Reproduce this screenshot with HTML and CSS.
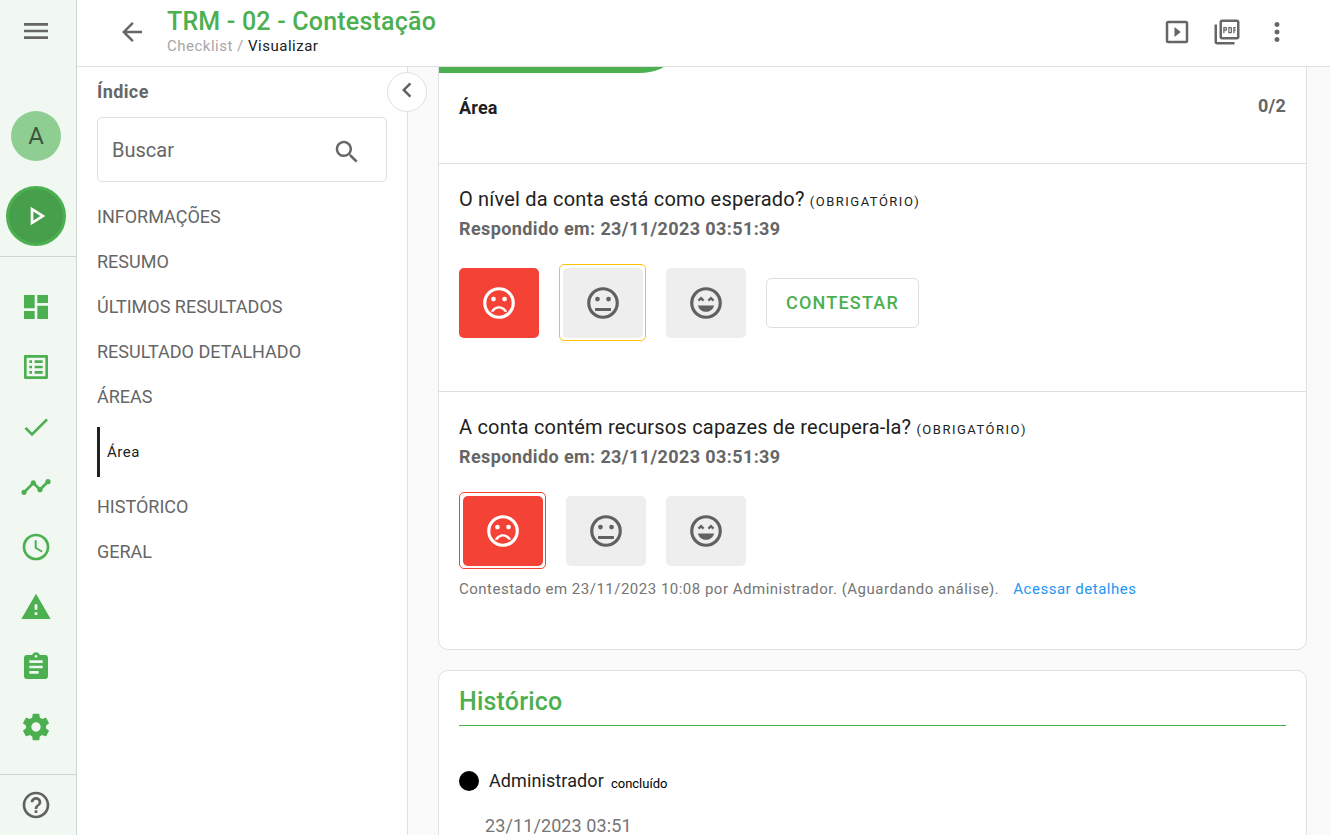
FILE: index.html
```html
<!DOCTYPE html>
<html lang="pt-BR">
<head>
<meta charset="utf-8">
<title>TRM - 02 - Contestação</title>
<link rel="stylesheet" href="styles.css">
</head>
<body>
<svg class="sprite" aria-hidden="true">
  <symbol id="sad" viewBox="0 0 24 24"><path d="M20,12A8,8 0 0,0 12,4A8,8 0 0,0 4,12A8,8 0 0,0 12,20A8,8 0 0,0 20,12M22,12A10,10 0 0,1 12,22A10,10 0 0,1 2,12A10,10 0 0,1 12,2A10,10 0 0,1 22,12M15.5,8A1.5,1.5 0 1,1 15.5,11A1.5,1.5 0 1,1 15.5,8M8.5,8A1.5,1.5 0 1,1 8.5,11A1.5,1.5 0 1,1 8.5,8M12 14c-2.330 0-4.320 1.450-5.120 3.500h1.670c.69-1.190 1.970-2 3.450-2s2.750.81 3.450 2h1.670c-.8-2.050-2.790-3.500-5.120-3.500z"/></symbol>
  <symbol id="neutral" viewBox="0 0 24 24"><path d="M20,12A8,8 0 0,0 12,4A8,8 0 0,0 4,12A8,8 0 0,0 12,20A8,8 0 0,0 20,12M22,12A10,10 0 0,1 12,22A10,10 0 0,1 2,12A10,10 0 0,1 12,2A10,10 0 0,1 22,12M15.5,8A1.5,1.5 0 1,1 15.5,11A1.5,1.5 0 1,1 15.5,8M8.5,8A1.5,1.5 0 1,1 8.5,11A1.5,1.5 0 1,1 8.5,8M7,15.1H17V17H7Z"/></symbol>
  <symbol id="happy" viewBox="0 0 24 24"><path d="M20,12A8,8 0 0,0 12,4A8,8 0 0,0 4,12A8,8 0 0,0 12,20A8,8 0 0,0 20,12M22,12A10,10 0 0,1 12,22A10,10 0 0,1 2,12A10,10 0 0,1 12,2A10,10 0 0,1 22,12M6.9,13.500H17.1C16.6,15.9 14.5,17.500 12,17.500C9.500,17.500 7.400,15.900 6.900,13.500M13 9.940L14.060 11l1.060-1.060L16.180 11l1.060-1.060-2.120-2.120zM8.880 9.940L9.940 11 11 9.940 8.880 7.820 6.760 9.940 7.820 11z"/></symbol>
</svg>
<div class="app">
  <nav class="rail" aria-label="Principal">
    <div class="rail-top">
      <button class="icon-btn" aria-label="Menu"><svg class="i32" viewBox="0 0 24 24"><path d="M3 6h18v2H3zM3 11h18v2H3zM3 16h18v2H3z"/></svg></button>
      <button class="avatar">A</button>
      <button class="start" aria-label="Iniciar"><svg class="i32" viewBox="0 0 24 24"><path d="M10 8.640L15.270 12 10 15.360zM8 5v14l11-7z"/></svg></button>
    </div>
    <div class="rail-links">
      <a href="#" aria-label="Painel"><svg class="i32" viewBox="0 0 24 24"><path d="M13 3v6h8V3m-8 18h8V11h-8M3 21h8v-6H3m0-2h8V3H3v10z"/></svg></a>
      <a href="#" aria-label="Checklists"><svg class="i32" viewBox="0 0 24 24"><path d="M11 7h6v2h-6zm0 4h6v2h-6zm0 4h6v2h-6zM7 7h2v2H7zm0 4h2v2H7zm0 4h2v2H7zM20.100 3H3.900c-.5 0-.9.400-.9.900v16.200c0 .4.400.9.900.9h16.200c.4 0 .9-.5.900-.9V3.900c0-.5-.5-.9-.9-.9zM19 19H5V5h14z"/></svg></a>
      <a href="#" aria-label="Concluídos"><svg class="i32" viewBox="0 0 24 24"><path d="M9 16.200L4.800 12l-1.400 1.400L9 19 21 7l-1.400-1.400z"/></svg></a>
      <a href="#" aria-label="Análises"><svg class="i32" viewBox="0 0 24 24"><path d="M23 8c0 1.100-.9 2-2 2-.18 0-.35-.02-.51-.07l-3.560 3.550c.05.160.07.340.07.520 0 1.100-.9 2-2 2s-2-.9-2-2c0-.18.020-.36.070-.52l-2.550-2.550c-.16.050-.34.070-.52.070s-.36-.02-.52-.07l-4.550 4.560c.05.160.07.330.07.510 0 1.100-.9 2-2 2s-2-.9-2-2 .9-2 2-2c.18 0 .350.020.510.070l4.560-4.550C8.020 9.360 8 9.180 8 9c0-1.100.9-2 2-2s2 .9 2 2c0 .18-.02.360-.07.520l2.550 2.550c.16-.05.340-.07.520-.07s.36.020.52.070l3.550-3.560C19.020 8.350 19 8.180 19 8c0-1.100.9-2 2-2s2 .9 2 2z"/></svg></a>
      <a href="#" aria-label="Agenda"><svg class="i32" viewBox="0 0 24 24"><path d="M12 20a8 8 0 0 0 8-8 8 8 0 0 0-8-8 8 8 0 0 0-8 8 8 8 0 0 0 8 8m0-18a10 10 0 0 1 10 10 10 10 0 0 1-10 10A10 10 0 0 1 2 12 10 10 0 0 1 12 2m.5 5v5.250l4.500 2.670-.75 1.230L11 13V7z"/></svg></a>
      <a href="#" aria-label="Alertas"><svg class="i32" viewBox="0 0 24 24"><path d="M1 21h22L12 2 1 21zm12-3h-2v-2h2v2zm0-4h-2v-4h2v4z"/></svg></a>
      <a href="#" aria-label="Planos"><svg class="i32" viewBox="0 0 24 24"><path d="M19 3h-4.180C14.400 1.840 13.300 1 12 1s-2.400.84-2.820 2H5c-1.100 0-2 .9-2 2v14c0 1.100.9 2 2 2h14c1.100 0 2-.9 2-2V5c0-1.100-.9-2-2-2zm-7 0c.55 0 1 .45 1 1s-.45 1-1 1-1-.45-1-1 .45-1 1-1zm2 14H7v-2h7v2zm3-4H7v-2h10v2zm0-4H7V7h10v2z"/></svg></a>
      <a href="#" aria-label="Configurações"><svg class="i32" viewBox="0 0 24 24"><path d="M12,15.500A3.500,3.500 0 0,1 8.500,12A3.500,3.500 0 0,1 12,8.500A3.500,3.500 0 0,1 15.500,12A3.500,3.500 0 0,1 12,15.500M19.430,12.970C19.470,12.650 19.500,12.330 19.500,12C19.500,11.670 19.470,11.340 19.430,11L21.540,9.370C21.730,9.220 21.780,8.950 21.660,8.730L19.660,5.270C19.540,5.050 19.270,4.960 19.050,5.050L16.560,6.050C16.040,5.660 15.500,5.320 14.870,5.070L14.500,2.420C14.460,2.180 14.250,2 14,2H10C9.750,2 9.540,2.180 9.500,2.420L9.130,5.070C8.500,5.320 7.960,5.660 7.440,6.050L4.950,5.050C4.730,4.960 4.460,5.050 4.340,5.270L2.340,8.730C2.210,8.950 2.270,9.220 2.460,9.370L4.570,11C4.530,11.340 4.500,11.670 4.500,12C4.500,12.330 4.530,12.650 4.570,12.970L2.460,14.630C2.270,14.780 2.210,15.050 2.340,15.270L4.340,18.730C4.460,18.950 4.730,19.030 4.950,18.950L7.440,17.940C7.960,18.340 8.500,18.680 9.130,18.930L9.500,21.580C9.540,21.820 9.750,22 10,22H14C14.250,22 14.460,21.820 14.500,21.580L14.870,18.930C15.500,18.670 16.040,18.340 16.560,17.940L19.050,18.950C19.270,19.030 19.540,18.950 19.660,18.730L21.660,15.270C21.780,15.050 21.730,14.780 21.540,14.630L19.430,12.970Z"/></svg></a>
    </div>
    <a class="rail-help" href="#" aria-label="Ajuda"><svg class="i32" viewBox="0 0 24 24"><path d="M11 18h2v-2h-2v2zm1-16C6.480 2 2 6.480 2 12s4.480 10 10 10 10-4.480 10-10S17.520 2 12 2zm0 18c-4.410 0-8-3.590-8-8s3.590-8 8-8 8 3.590 8 8-3.590 8-8 8zm0-14c-2.210 0-4 1.790-4 4h2c0-1.100.9-2 2-2s2 .9 2 2c0 2-3 1.750-3 5h2c0-2.250 3-2.500 3-5 0-2.210-1.790-4-4-4z"/></svg></a>
  </nav>
  <div class="page">
    <header class="topbar">
      <button class="icon-btn" aria-label="Voltar"><svg class="i30" viewBox="0 0 24 24"><path d="M20 11H7.830l5.590-5.590L12 4l-8 8 8 8 1.410-1.410L7.830 13H20v-2z"/></svg></button>
      <div class="heading">
        <h1>TRM - 02 - Contestação</h1>
        <p class="crumbs"><a href="#">Checklist</a> / <span>Visualizar</span></p>
      </div>
      <button class="icon-btn" aria-label="Apresentar"><svg class="i30" viewBox="0 0 24 24"><path d="M19 19H5V5h14m0-2H5a2 2 0 0 0-2 2v14a2 2 0 0 0 2 2h14a2 2 0 0 0 2-2V5a2 2 0 0 0-2-2m-9 5v8l5-4"/></svg></button>
      <button class="icon-btn" aria-label="Exportar PDF"><svg class="i30" viewBox="0 0 24 24"><path d="M20 2H8c-1.100 0-2 .9-2 2v12c0 1.100.9 2 2 2h12c1.100 0 2-.9 2-2V4c0-1.100-.9-2-2-2zm0 14H8V4h12v12zM4 6H2v14c0 1.100.9 2 2 2h14v-2H4V6zm12 6V9c0-.55-.45-1-1-1h-2v5h2c.55 0 1-.45 1-1zm-2-3h1v3h-1V9zm4 2h1v-1h-1V9h1V8h-2v5h1zm-8 0h1c.55 0 1-.45 1-1V9c0-.55-.45-1-1-1H9v5h1v-2zm0-2h1v1h-1V9z"/></svg></button>
      <button class="icon-btn" aria-label="Mais opções"><svg class="i30" viewBox="0 0 24 24"><path d="M12 8c1.100 0 2-.9 2-2s-.9-2-2-2-2 .9-2 2 .9 2 2 2zm0 2c-1.100 0-2 .9-2 2s.9 2 2 2 2-.9 2-2-.9-2-2-2zm0 6c-1.100 0-2 .9-2 2s.9 2 2 2 2-.9 2-2-.9-2-2-2z"/></svg></button>
    </header>
    <div class="body">
      <aside class="index">
        <h2>Índice</h2>
        <button class="collapse" aria-label="Recolher índice"><svg class="i30" viewBox="0 0 24 24"><path d="M15.410 16.580L10.830 12l4.580-4.590L14 6l-6 6 6 6z"/></svg></button>
        <div class="search">
          <input type="text" placeholder="Buscar" aria-label="Buscar">
          <svg class="i30" viewBox="0 0 24 24"><path d="M15.500 14h-.79l-.28-.27C15.410 12.590 16 11.110 16 9.500 16 5.910 13.090 3 9.500 3S3 5.910 3 9.500 5.910 16 9.500 16c1.610 0 3.090-.59 4.230-1.570l.27.280v.79l5 4.990L20.490 19l-4.990-5zm-6 0C7.010 14 5 11.990 5 9.500S7.010 5 9.500 5 14 7.010 14 9.500 11.990 14 9.500 14z"/></svg>
        </div>
        <ul>
          <li><a href="#">INFORMAÇÕES</a></li>
          <li><a href="#">RESUMO</a></li>
          <li><a href="#">ÚLTIMOS RESULTADOS</a></li>
          <li><a href="#">RESULTADO DETALHADO</a></li>
          <li><a href="#">ÁREAS</a></li>
          <li class="current"><a href="#">Área</a></li>
          <li><a href="#">HISTÓRICO</a></li>
          <li><a href="#">GERAL</a></li>
        </ul>
      </aside>
      <main class="content">
        <section class="card areas">
          <div class="ribbon"></div>
          <div class="area-head"><h3>Área</h3><span>0/2</span></div>
          <article class="question">
            <h4>O nível da conta está como esperado? <small>(OBRIGATÓRIO)</small></h4>
            <p class="answered">Respondido em: 23/11/2023 03:51:39</p>
            <div class="answers">
              <button class="face chosen" aria-label="Ruim"><svg class="i38"><use href="#sad"/></svg></button>
              <div class="ring amber"><button class="face" aria-label="Regular"><svg class="i38"><use href="#neutral"/></svg></button></div>
              <button class="face" aria-label="Bom"><svg class="i38"><use href="#happy"/></svg></button>
              <button class="contest">CONTESTAR</button>
            </div>
          </article>
          <article class="question">
            <h4>A conta contém recursos capazes de recupera-la? <small>(OBRIGATÓRIO)</small></h4>
            <p class="answered">Respondido em: 23/11/2023 03:51:39</p>
            <div class="answers">
              <div class="ring red"><button class="face chosen" aria-label="Ruim"><svg class="i38"><use href="#sad"/></svg></button></div>
              <button class="face" aria-label="Regular"><svg class="i38"><use href="#neutral"/></svg></button>
              <button class="face" aria-label="Bom"><svg class="i38"><use href="#happy"/></svg></button>
            </div>
            <p class="note"><span>Contestado em 23/11/2023 10:08 por Administrador. (Aguardando análise).</span><a href="#">Acessar detalhes</a></p>
          </article>
        </section>
        <section class="card history">
          <h2>Histórico</h2>
          <div class="event"><i class="dot"></i><span>Administrador</span><small>concluído</small></div>
          <p class="when">23/11/2023 03:51</p>
        </section>
      </main>
    </div>
  </div>
</div>
</body>
</html>
```
FILE: styles.css
```css
* { box-sizing: border-box; }
body, h1, h2, h3, h4, p, ul { margin: 0; padding: 0; }
body { font-family: Roboto, "Liberation Sans", sans-serif; color: #212121; background: #fafafa; }
button { font-family: inherit; border: 0; padding: 0; cursor: pointer; background: none; }
a { color: inherit; text-decoration: none; }
svg { display: block; fill: currentColor; flex: none; }
.sprite { position: absolute; width: 0; height: 0; }
.i30 { width: 30px; height: 30px; }
.i32 { width: 32px; height: 32px; }
.i38 { width: 38px; height: 38px; }

.app { display: flex; height: 100vh; overflow: hidden; }

.rail { display: flex; flex-direction: column; flex: none; width: 77px; background: #f1f8f1; border-right: 1px solid #cfd6cf; color: #4caf50; }
.rail-top { display: flex; flex-direction: column; align-items: center; height: 257px; padding: 15px 4px 10px 0; border-bottom: 1px solid #cfd6cf; }
.icon-btn { display: flex; color: #666; }
.avatar { width: 50px; height: 50px; margin-top: 64px; border-radius: 50%; background: #8fce92; color: #3c563d; font-size: 24px; }
.start { display: flex; align-items: center; justify-content: center; width: 60px; height: 60px; margin-top: 25px; border: 3px solid #4caf50; border-radius: 50%; background: #489f4b; color: #fff; }
.rail-links { display: flex; flex: 1; flex-direction: column; align-items: center; gap: 28px; padding: 34px 4px 0 0; }
.rail-help { display: flex; justify-content: center; height: 61px; padding: 14px 4px 0 0; border-top: 1px solid #cfd6cf; color: #616161; }

.page { display: flex; flex: 1; flex-direction: column; min-width: 0; }
.topbar { display: flex; flex: none; align-items: center; gap: 20px; height: 67px; padding: 0 38px 2px 40px; background: #fff; border-bottom: 1px solid #e0e0e0; }
.heading { flex: 1; }
h1 { font-size: 25px; line-height: 28px; font-weight: 500; letter-spacing: 0.2px; color: #4caf50; }
.crumbs { font-size: 15px; line-height: 20px; letter-spacing: 0.5px; color: #a6a6a6; }
.crumbs span { color: #212121; }

.body { display: flex; flex: 1; min-height: 0; }
.index { position: relative; flex: none; width: 331px; padding: 14px 20px 0; background: #fff; border-right: 1px solid #e0e0e0; color: #666; }
.index h2 { font-size: 18px; line-height: 22px; font-weight: 700; letter-spacing: 0.4px; }
.collapse { position: absolute; top: 5px; right: -20px; z-index: 1; display: flex; justify-content: center; width: 40px; height: 40px; padding-top: 2px; border: 1px solid #e0e0e0; border-radius: 50%; background: #fff; color: #616161; }
.search { display: flex; align-items: center; height: 65px; margin-top: 14px; padding: 0 24px 0 14px; border: 1px solid #e0e0e0; border-radius: 5px; }
.search svg { margin-top: 4px; }
.search input { flex: 1; min-width: 0; padding: 0; border: 0; outline: 0; background: none; color: #666; font: 20px Roboto, sans-serif; }
.search input::placeholder { color: #666; opacity: 1; }
.index ul { margin-top: 12px; list-style: none; }
.index li { font-size: 18px; line-height: 45px; }
.index .current { height: 50px; margin: 8px 0 7px; padding-left: 7px; border-left: 3px solid #212121; font-size: 15px; line-height: 50px; letter-spacing: 0.5px; color: #212121; }

.content { flex: 1; min-width: 0; padding: 0 23px 0 30px; overflow: hidden; background: #fafafa; }
.card { background: #fff; border: 1px solid #e0e0e0; border-radius: 10px; overflow: hidden; }
.areas { margin-top: -45px; }
.ribbon { width: 251px; height: 50px; background: #4caf50; border-bottom-right-radius: 50px; }
.area-head { display: flex; justify-content: space-between; height: 90px; padding: 22px 20px 0; font-size: 18px; line-height: 24px; letter-spacing: 0.2px; font-weight: 700; }
.area-head h3 { font: inherit; line-height: 26px; }
.area-head span { line-height: 22px; color: #666; }
.question { min-height: 228px; padding: 20px; border-top: 1px solid #e0e0e0; }
.question + .question { min-height: 258px; }
.question h4 { font-size: 20px; line-height: 30px; font-weight: 400; letter-spacing: 0.2px; }
.question small { font-size: 13px; letter-spacing: 1.5px; }
.answered { font-size: 18px; line-height: 24px; font-weight: 700; letter-spacing: 0.4px; color: #666; }
.answers { display: flex; align-items: center; gap: 20px; margin-top: 23px; }
.face { display: flex; align-items: center; justify-content: center; width: 80px; height: 70px; border-radius: 5px; background: #eee; color: #616161; }
.face.chosen { background: #f44336; color: #fff; }
.ring { padding: 3px 2px 2px 3px; border: 1px solid; border-radius: 5px; }
.ring.amber { border-color: #ffc107; }
.ring.red { border-color: #f44336; }
.contest { height: 50px; padding: 0 19px; border: 1px solid #e0e0e0; border-radius: 5px; color: #4caf50; font-size: 18px; font-weight: 500; letter-spacing: 1.2px; }
.note { display: flex; gap: 14px; margin-top: 10px; font-size: 15px; line-height: 20px; letter-spacing: 0.5px; color: #757575; }
.note a { color: #2196f3; }

.history { margin-top: 20px; padding: 11px 20px 40px; }
.history h2 { padding-bottom: 3px; border-bottom: 1px solid #4caf50; color: #4caf50; font-size: 25px; line-height: 40px; font-weight: 500; letter-spacing: 0.2px; }
.event { display: flex; align-items: center; gap: 10px; margin-top: 40px; font-size: 18px; line-height: 30px; }
.event span { letter-spacing: 0.1px; }
.event small { margin: 5px 0 0 -3px; font-size: 13px; line-height: 20px; color: #000; }
.dot { width: 20px; height: 20px; border-radius: 50%; background: #000; }
.when { margin-top: 15px; padding-left: 26px; font-size: 18px; line-height: 30px; letter-spacing: 0.1px; color: #757575; }
```
